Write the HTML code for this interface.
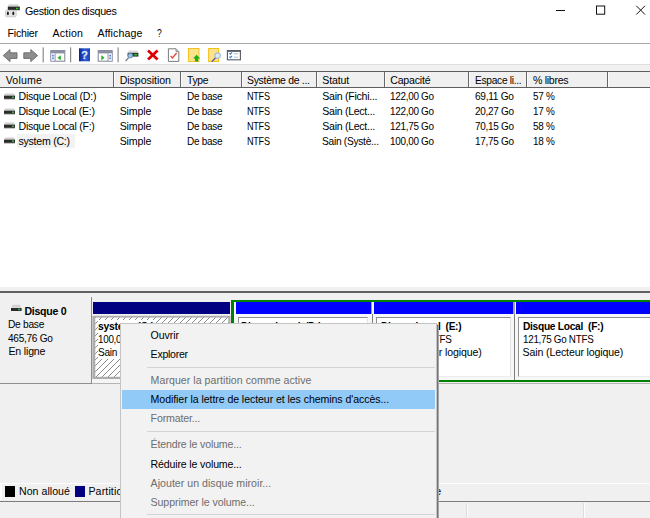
<!DOCTYPE html>
<html lang="fr">
<head>
<meta charset="utf-8">
<title>Gestion des disques</title>
<style>
html,body{margin:0;padding:0;overflow:hidden;}
body{width:650px;height:518px;overflow:hidden;position:relative;background:#fff;
 font-family:"Liberation Sans",sans-serif;font-size:10.6px;color:#000;line-height:13px;}
.a{position:absolute;white-space:nowrap;}
.t{position:absolute;white-space:pre;line-height:13px;transform-origin:0 50%;}
.b{font-weight:bold;}
.hs{position:absolute;top:72px;width:1px;height:15px;background:#666;border-right:1px solid #fcfcfc;}
.sep{position:absolute;left:147px;width:288px;height:1px;background:#d4d4d4;}

</style>
</head>
<body>
<svg class="a" style="left:4px;top:3px" width="17" height="16" viewBox="0 0 17 16">
 <path d="M5 1.2h9l1.5 2.5h-12z" fill="#d4d4d4"/>
 <rect x="3.8" y="3.6" width="12" height="3.6" fill="#2a2a2a"/>
 <rect x="12" y="4.7" width="2.3" height="1.6" fill="#2fc12f"/>
 <rect x="1.6" y="7.2" width="10.6" height="6.6" rx="1" fill="#e4e4e4" stroke="#b4b4b4" stroke-width=".6"/>
 <ellipse cx="3.9" cy="10.4" rx="1" ry="1.8" fill="#1a1a1a"/>
 <ellipse cx="9.3" cy="10.4" rx="1" ry="1.8" fill="#1a1a1a"/>
</svg>
<svg class="a" style="left:550px;top:0" width="100" height="22" viewBox="0 0 100 22">
 <path d="M6 10.5h9" stroke="#111" stroke-width="1" fill="none"/>
 <rect x="46.5" y="6" width="8.2" height="8.2" stroke="#111" stroke-width="1" fill="none"/>
 <path d="M86.3 5.8l8.7 8.7M95 5.8l-8.7 8.7" stroke="#111" stroke-width="1" fill="none"/>
</svg>
<div class="a" style="left:0;top:43px;width:650px;height:1px;background:#a9a9a9"></div>
<div class="a" style="left:0;top:64px;width:650px;height:8px;background:#f0f0f0;border-top:1px solid #dedede;box-sizing:border-box"></div>
<svg class="a" style="left:0;top:44px" width="260" height="21" viewBox="0 44 260 21">
 <defs>
  <linearGradient id="hb" x1="0" y1="0" x2="1" y2="0"><stop offset="0" stop-color="#0b1f8f"/><stop offset=".55" stop-color="#2f62d8"/><stop offset="1" stop-color="#1d3fb8"/></linearGradient>
 </defs>
 <!-- back / forward arrows -->
 <path d="M3.2 55.6l6.8-6v3.2h7v5.6h-7v3.2z" fill="#8e8e8e" stroke="#6a6a6a" stroke-width=".9" stroke-linejoin="round"/>
 <path d="M37.6 55.6l-6.8-6v3.2h-7v5.6h7v3.2z" fill="#8e8e8e" stroke="#6a6a6a" stroke-width=".9" stroke-linejoin="round"/>
 <!-- separators -->
 <rect x="42.6" y="47.4" width="1.2" height="15" fill="#8c8c8c"/>
 <rect x="70" y="47.4" width="1.2" height="15" fill="#8c8c8c"/>
 <rect x="117.5" y="47.4" width="1.2" height="15" fill="#8c8c8c"/>
 <!-- console tree icon 1 -->
 <rect x="50.8" y="50.6" width="14" height="10.6" fill="#fff" stroke="#7d8496" stroke-width="1"/>
 <rect x="50.8" y="50.6" width="14" height="2.8" fill="#8a90a2"/>
 <rect x="51.3" y="53.4" width="3.4" height="7.4" fill="#dfe6f5"/>
 <rect x="54.7" y="53.4" width=".8" height="7.6" fill="#7d8496"/>
 <rect x="52.3" y="55" width="1.3" height="1.3" fill="#2f62d8"/><rect x="52.3" y="57.6" width="1.3" height="1.3" fill="#2f62d8"/>
 <path d="M57.5 57.8l3.3-2.5v5z" fill="#20b020"/>
 <!-- help icon -->
 <rect x="79" y="48.3" width="11" height="13" fill="url(#hb)"/>
 <text x="84.5" y="59.4" font-family="Liberation Sans, sans-serif" font-weight="bold" font-size="11.5" fill="#e8f0ff" text-anchor="middle">?</text>
 <!-- console tree icon 2 -->
 <rect x="98.2" y="50.6" width="14" height="10.6" fill="#fff" stroke="#7d8496" stroke-width="1"/>
 <rect x="98.2" y="50.6" width="14" height="2.8" fill="#8a90a2"/>
 <rect x="108.4" y="53.4" width="3.4" height="7.4" fill="#dfe6f5"/>
 <rect x="107.6" y="53.4" width=".8" height="7.6" fill="#7d8496"/>
 <rect x="109.5" y="55" width="1.3" height="1.3" fill="#2f62d8"/><rect x="109.5" y="57.6" width="1.3" height="1.3" fill="#2f62d8"/>
 <path d="M104.6 57.8l-3.3-2.5v5z" fill="#20b020"/>
 <!-- rescan icon -->
 <path d="M129 50.4h8l1.3 2.4h-10.6z" fill="#d9d9d9"/>
 <rect x="127.6" y="52.8" width="10.8" height="3.8" fill="#30343a"/>
 <rect x="134.2" y="54" width="3" height="1.5" fill="#2fc12f"/>
 <circle cx="130.3" cy="55.6" r="2.4" fill="#8fc3ee" stroke="#5f7f9f" stroke-width=".8"/>
 <path d="M128.6 57.6l-3 3.6" stroke="#70757c" stroke-width="1.3"/>
 <!-- red X -->
 <path d="M148 50.6l9.6 9M157.6 50.6l-9.6 9" stroke="#e00000" stroke-width="2.7" stroke-linecap="butt"/>
 <!-- properties sheet -->
 <path d="M168.4 48.8h7.6l2.8 2.8v9.8h-10.4z" fill="#fff" stroke="#7a7a7a" stroke-width="1"/>
 <path d="M176 48.8v2.8h2.8" fill="#d0d0d0" stroke="#7a7a7a" stroke-width=".8"/>
 <path d="M170.6 55.8l1.8 2.2l4.2-5" fill="none" stroke="#e2432a" stroke-width="1.2"/>
 <!-- yellow doc with green arrow -->
 <rect x="188.4" y="48.5" width="10.6" height="13" fill="#fbe38e" stroke="#f3c21a" stroke-width="1"/>
 <path d="M196.6 54.8l3.6 3.6h-2v3.2h-3.2v-3.2h-2z" fill="#19b019"/>
 <!-- yellow doc with magnifier -->
 <rect x="208.6" y="48.5" width="10" height="13" fill="#fbe38e" stroke="#f3c21a" stroke-width="1"/>
 <path d="M215.4 58l-3.6 3.6" stroke="#5b4a9a" stroke-width="1.3"/>
 <circle cx="217.6" cy="55.6" r="2.8" fill="#dbeaf7" stroke="#8fa9cf" stroke-width="1"/>
 <!-- task list icon -->
 <rect x="227.4" y="50.8" width="13" height="9" fill="#fff" stroke="#555a66" stroke-width="1.1"/>
 <rect x="227" y="50" width="13.8" height="1.8" fill="#555a66"/>
 <path d="M229.4 53.2l1 1l1.6-1.8M229.4 56.6l1 1l1.6-1.8" fill="none" stroke="#2a7fe0" stroke-width="1.1"/>
 <path d="M233.6 53.8h4.6M233.6 57.2h4.6" stroke="#b0b6c4" stroke-width=".9"/>
</svg>

<div class="a" style="left:0;top:71px;width:650px;height:17px;background:#f0f0f0;border-top:1px solid #5e5e5e;border-bottom:1px solid #5e5e5e;box-sizing:border-box"></div>
<div class="hs" style="left:113px"></div>
<div class="hs" style="left:180px"></div>
<div class="hs" style="left:241px"></div>
<div class="hs" style="left:316px"></div>
<div class="hs" style="left:384px"></div>
<div class="hs" style="left:468px"></div>
<div class="hs" style="left:526px"></div>
<div class="hs" style="left:607px"></div>
<div class="a" style="left:17px;top:134px;width:58px;height:14px;background:#f2f2f2"></div>
<svg class="a" style="left:3px;top:92.8px" width="13" height="8" viewBox="0 0 13 8"><path d="M2 .6h9l1 2h-11z" fill="#cfcfcf"/><rect x="1" y="2.6" width="11" height="3.3" fill="#2b2b2b"/><rect x="9" y="3.5" width="2" height="1.4" fill="#35c435"/><rect x="1" y="5.9" width="11" height=".9" fill="#bdbdbd"/></svg>
<svg class="a" style="left:3px;top:107.5px" width="13" height="8" viewBox="0 0 13 8"><path d="M2 .6h9l1 2h-11z" fill="#cfcfcf"/><rect x="1" y="2.6" width="11" height="3.3" fill="#2b2b2b"/><rect x="9" y="3.5" width="2" height="1.4" fill="#35c435"/><rect x="1" y="5.9" width="11" height=".9" fill="#bdbdbd"/></svg>
<svg class="a" style="left:3px;top:122.3px" width="13" height="8" viewBox="0 0 13 8"><path d="M2 .6h9l1 2h-11z" fill="#cfcfcf"/><rect x="1" y="2.6" width="11" height="3.3" fill="#2b2b2b"/><rect x="9" y="3.5" width="2" height="1.4" fill="#35c435"/><rect x="1" y="5.9" width="11" height=".9" fill="#bdbdbd"/></svg>
<svg class="a" style="left:3px;top:137.0px" width="13" height="8" viewBox="0 0 13 8"><path d="M2 .6h9l1 2h-11z" fill="#cfcfcf"/><rect x="1" y="2.6" width="11" height="3.3" fill="#2b2b2b"/><rect x="9" y="3.5" width="2" height="1.4" fill="#35c435"/><rect x="1" y="5.9" width="11" height=".9" fill="#bdbdbd"/></svg>
<div class="a" style="left:0;top:287px;width:650px;height:231px;background:#f0f0f0"></div>
<div class="a" style="left:0;top:291.4px;width:650px;height:1.6px;background:#606060"></div>
<div class="a" style="left:0;top:383px;width:650px;height:1px;background:#b4b4b4"></div>
<div class="a" style="left:92px;top:378.5px;width:139px;height:4.5px;background:#f5f5f5"></div>
<div class="a" style="left:0;top:296.5px;width:91.7px;height:87.2px;background:#f0f0f0;border-right:1px solid #8e8e8e;border-bottom:1px solid #8e8e8e;box-sizing:border-box"></div>
<svg class="a" style="left:10px;top:304px" width="12" height="8" viewBox="0 0 12 8"><path d="M2.4 .8h7.6l1 3h-9.6z" fill="#d2d2d2"/><rect x="1" y="4" width="10.6" height="3" fill="#2b2b2b"/><rect x="8.2" y="4.7" width="2" height="1.4" fill="#35c435"/></svg>
<div class="a" style="left:92.5px;top:302.4px;width:137.5px;height:11.6px;background:#000080"></div>
<svg class="a" style="left:92px;top:314.5px" width="139" height="64" viewBox="0 0 139 64">
 <defs><pattern id="hz" width="6" height="6" patternUnits="userSpaceOnUse"><rect width="6" height="6" fill="#fff"/><path d="M-1 7l8-8M-1 1l2-2M5 7l2-2" stroke="#6e6e6e" stroke-width=".8"/></pattern></defs>
 <rect x=".4" y=".8" width="138" height="63.2" fill="#adadad"/>
 <rect x="3.3" y="2.6" width="133" height="59.2" fill="url(#hz)"/>
</svg>
<div class="a" style="left:231px;top:299.7px;width:419px;height:82.4px;border:solid #008000;border-width:2.5px 0 2.4px 3.4px;box-sizing:border-box;background:#f7f7f7"></div>
<div class="a" style="left:236px;top:302.2px;width:134.8px;height:11.8px;background:#0000ff"></div>
<div class="a" style="left:238px;top:316.6px;width:130.4px;height:60px;background:#fff;border:1px solid #8e8e8e;border-right-color:#e4e4e4;border-bottom-color:#ececec;box-sizing:border-box"></div>
<div class="a" style="left:370.8px;top:302.2px;width:2.7px;height:11.8px;background:linear-gradient(90deg,#a4a49c 0 55%,#f4f4f4 55%)"></div>
<div class="a" style="left:371.6px;top:314px;width:1px;height:65.7px;background:#7e7e7e"></div>
<div class="a" style="left:373.6px;top:302.2px;width:139.6px;height:11.8px;background:#0000ff"></div>
<div class="a" style="left:375.6px;top:316.6px;width:135.2px;height:60px;background:#fff;border:1px solid #8e8e8e;border-right-color:#e4e4e4;border-bottom-color:#ececec;box-sizing:border-box"></div>
<div class="a" style="left:513.2px;top:302.2px;width:2.7px;height:11.8px;background:linear-gradient(90deg,#a4a49c 0 55%,#f4f4f4 55%)"></div>
<div class="a" style="left:514px;top:314px;width:1px;height:65.7px;background:#7e7e7e"></div>
<div class="a" style="left:515.9px;top:302.2px;width:146.1px;height:11.8px;background:#0000ff"></div>
<div class="a" style="left:517.9px;top:316.6px;width:141.7px;height:60px;background:#fff;border:1px solid #8e8e8e;border-right-color:#e4e4e4;border-bottom-color:#ececec;box-sizing:border-box"></div>
<div class="a" style="left:0;top:483px;width:650px;height:1px;background:#fdfdfd"></div>
<div class="a" style="left:0;top:500.5px;width:650px;height:1px;background:#7d7d7d"></div>
<div class="a" style="left:0;top:483px;width:1.5px;height:17px;background:#fcfcfc"></div>
<div class="a" style="left:5px;top:486px;width:9.5px;height:11px;background:#000"></div>
<div class="a" style="left:75px;top:486px;width:9.5px;height:11px;background:#000080"></div>
<div class="a" style="left:466px;top:503px;width:1px;height:15px;background:#fdfdfd;border-left:1px solid #dcdcdc"></div>
<div class="a" style="left:583px;top:503px;width:1px;height:15px;background:#fdfdfd;border-left:1px solid #dcdcdc"></div>
<div class="t" style="left:24.6px;top:5.3px;font-size:11px;letter-spacing:-0.30px;transform:scaleX(0.974);">Gestion des disques</div>
<div class="t" style="left:7.5px;top:27.3px;letter-spacing:-0.21px;">Fichier</div>
<div class="t" style="left:52.6px;top:27.3px;letter-spacing:0.16px;">Action</div>
<div class="t" style="left:97.6px;top:27.3px;letter-spacing:0.09px;">Affichage</div>
<div class="t" style="left:156.8px;top:27.3px;letter-spacing:-0.30px;transform:scaleX(0.804);">?</div>
<div class="t" style="left:5.7px;top:74.1px;letter-spacing:0.19px;">Volume</div>
<div class="t" style="left:119.7px;top:74.1px;letter-spacing:-0.05px;">Disposition</div>
<div class="t" style="left:186.6px;top:74.1px;letter-spacing:-0.30px;transform:scaleX(0.973);">Type</div>
<div class="t" style="left:246.7px;top:74.1px;letter-spacing:-0.30px;transform:scaleX(0.986);">Système de ...</div>
<div class="t" style="left:322.3px;top:74.1px;letter-spacing:-0.16px;">Statut</div>
<div class="t" style="left:390.2px;top:74.1px;letter-spacing:-0.21px;">Capacité</div>
<div class="t" style="left:474.6px;top:74.1px;letter-spacing:-0.30px;transform:scaleX(0.962);">Espace li...</div>
<div class="t" style="left:533.0px;top:74.1px;letter-spacing:-0.30px;">% libres</div>
<div class="t" style="left:18.5px;top:90.3px;letter-spacing:-0.24px;">Disque Local (D:)</div>
<div class="t" style="left:119.7px;top:90.3px;letter-spacing:-0.15px;">Simple</div>
<div class="t" style="left:186.6px;top:90.3px;letter-spacing:-0.30px;transform:scaleX(0.942);">De base</div>
<div class="t" style="left:246.7px;top:90.3px;letter-spacing:-0.30px;transform:scaleX(0.858);">NTFS</div>
<div class="t" style="left:322.3px;top:90.3px;letter-spacing:-0.28px;">Sain (Fichi...</div>
<div class="t" style="left:390.2px;top:90.3px;letter-spacing:-0.30px;transform:scaleX(0.936);">122,00 Go</div>
<div class="t" style="left:474.6px;top:90.3px;letter-spacing:-0.30px;transform:scaleX(0.958);">69,11 Go</div>
<div class="t" style="left:533.0px;top:90.3px;letter-spacing:-0.30px;transform:scaleX(0.937);">57 %</div>
<div class="t" style="left:18.5px;top:105.0px;letter-spacing:-0.30px;">Disque Local (E:)</div>
<div class="t" style="left:119.7px;top:105.0px;letter-spacing:-0.15px;">Simple</div>
<div class="t" style="left:186.6px;top:105.0px;letter-spacing:-0.30px;transform:scaleX(0.942);">De base</div>
<div class="t" style="left:246.7px;top:105.0px;letter-spacing:-0.30px;transform:scaleX(0.858);">NTFS</div>
<div class="t" style="left:322.3px;top:105.0px;letter-spacing:-0.30px;">Sain (Lect...</div>
<div class="t" style="left:390.2px;top:105.0px;letter-spacing:-0.30px;transform:scaleX(0.936);">122,00 Go</div>
<div class="t" style="left:474.6px;top:105.0px;letter-spacing:-0.30px;transform:scaleX(0.940);">20,27 Go</div>
<div class="t" style="left:533.0px;top:105.0px;letter-spacing:-0.30px;transform:scaleX(0.937);">17 %</div>
<div class="t" style="left:18.5px;top:119.8px;letter-spacing:-0.27px;">Disque Local (F:)</div>
<div class="t" style="left:119.7px;top:119.8px;letter-spacing:-0.15px;">Simple</div>
<div class="t" style="left:186.6px;top:119.8px;letter-spacing:-0.30px;transform:scaleX(0.942);">De base</div>
<div class="t" style="left:246.7px;top:119.8px;letter-spacing:-0.30px;transform:scaleX(0.858);">NTFS</div>
<div class="t" style="left:322.3px;top:119.8px;letter-spacing:-0.30px;">Sain (Lect...</div>
<div class="t" style="left:390.2px;top:119.8px;letter-spacing:-0.30px;transform:scaleX(0.936);">121,75 Go</div>
<div class="t" style="left:474.6px;top:119.8px;letter-spacing:-0.30px;transform:scaleX(0.940);">70,15 Go</div>
<div class="t" style="left:533.0px;top:119.8px;letter-spacing:-0.30px;transform:scaleX(0.937);">58 %</div>
<div class="t" style="left:18.5px;top:134.5px;letter-spacing:-0.26px;">system (C:)</div>
<div class="t" style="left:119.7px;top:134.5px;letter-spacing:-0.15px;">Simple</div>
<div class="t" style="left:186.6px;top:134.5px;letter-spacing:-0.30px;transform:scaleX(0.942);">De base</div>
<div class="t" style="left:246.7px;top:134.5px;letter-spacing:-0.30px;transform:scaleX(0.858);">NTFS</div>
<div class="t" style="left:322.3px;top:134.5px;letter-spacing:-0.30px;transform:scaleX(0.964);">Sain (Systè...</div>
<div class="t" style="left:390.2px;top:134.5px;letter-spacing:-0.30px;transform:scaleX(0.936);">100,00 Go</div>
<div class="t" style="left:474.6px;top:134.5px;letter-spacing:-0.30px;transform:scaleX(0.940);">17,75 Go</div>
<div class="t" style="left:533.0px;top:134.5px;letter-spacing:-0.30px;transform:scaleX(0.937);">18 %</div>
<div class="t b" style="left:24.5px;top:304.8px;letter-spacing:-0.30px;">Disque 0</div>
<div class="t" style="left:8.4px;top:318.3px;letter-spacing:-0.30px;transform:scaleX(0.966);">De base</div>
<div class="t" style="left:8.4px;top:331.5px;letter-spacing:-0.30px;transform:scaleX(0.953);">465,76 Go</div>
<div class="t" style="left:8.4px;top:344.7px;letter-spacing:-0.17px;">En ligne</div>
<div class="t" style="left:19.0px;top:485.1px;letter-spacing:0.03px;">Non alloué</div>
<div class="t" style="left:88.4px;top:485.1px;letter-spacing:0.14px;">Partition principale</div>
<div class="t" style="left:196.0px;top:485.1px;letter-spacing:0.23px;">Partition étendue</div>
<div class="t" style="left:298.0px;top:485.1px;letter-spacing:-0.11px;">Espace libre</div>
<div class="t" style="left:373.0px;top:485.1px;letter-spacing:-0.30px;">Lecteur logique</div>
<div class="t b" style="left:98.2px;top:319.9px;letter-spacing:-0.30px;transform:scaleX(0.982);background:#fff;">system  (C:)</div>
<div class="t" style="left:98.2px;top:332.7px;letter-spacing:-0.30px;transform:scaleX(0.928);background:#fff;">100,00 Go NTFS</div>
<div class="t" style="left:98.2px;top:346.3px;letter-spacing:-0.30px;transform:scaleX(0.954);background:#fff;">Sain (Système</div>
<div class="t b" style="left:241.4px;top:319.9px;letter-spacing:-0.30px;transform:scaleX(0.949);">Disque Local  (D:)</div>
<div class="t" style="left:241.4px;top:332.7px;letter-spacing:-0.30px;transform:scaleX(0.928);">122,00 Go NTFS</div>
<div class="t" style="left:241.4px;top:346.3px;letter-spacing:-0.18px;">Sain (Fichier d'échange, L</div>
<div class="t b" style="left:381.0px;top:319.9px;letter-spacing:-0.30px;transform:scaleX(0.955);">Disque Local  (E:)</div>
<div class="t" style="left:381.0px;top:332.7px;letter-spacing:-0.30px;transform:scaleX(0.928);">122,00 Go NTFS</div>
<div class="t" style="left:381.0px;top:346.3px;letter-spacing:-0.14px;">Sain (Lecteur logique)</div>
<div class="t b" style="left:522.6px;top:319.9px;letter-spacing:-0.30px;transform:scaleX(0.962);">Disque Local  (F:)</div>
<div class="t" style="left:522.6px;top:332.7px;letter-spacing:-0.30px;transform:scaleX(0.928);">121,75 Go NTFS</div>
<div class="t" style="left:522.6px;top:346.3px;letter-spacing:-0.14px;">Sain (Lecteur logique)</div>
<div class="a" style="left:120px;top:322.6px;width:317px;height:200px;background:#f2f2f2;border:1px solid #c4c4c4;box-sizing:border-box"></div>
<div class="a" style="left:437px;top:326px;width:1px;height:200px;background:#757575;border-right:1px solid #a6a6a6"></div>
<div class="a" style="left:122px;top:390px;width:313px;height:18.6px;background:#91c9f7"></div>
<div class="sep" style="top:367px"></div>
<div class="sep" style="top:431.4px"></div>
<div class="sep" style="top:514.4px"></div>
<div class="t" style="left:150.6px;top:328.7px;letter-spacing:-0.06px;">Ouvrir</div>
<div class="t" style="left:150.6px;top:348.1px;letter-spacing:-0.27px;">Explorer</div>
<div class="t" style="left:150.6px;top:373.5px;letter-spacing:0.04px;color:#6d6d6d;">Marquer la partition comme active</div>
<div class="t" style="left:150.6px;top:392.7px;letter-spacing:-0.08px;">Modifier la lettre de lecteur et les chemins d'accès...</div>
<div class="t" style="left:150.6px;top:412.0px;letter-spacing:-0.16px;color:#6d6d6d;">Formater...</div>
<div class="t" style="left:150.6px;top:438.3px;letter-spacing:-0.16px;color:#6d6d6d;">Étendre le volume...</div>
<div class="t" style="left:150.6px;top:457.5px;letter-spacing:-0.16px;">Réduire le volume...</div>
<div class="t" style="left:150.6px;top:476.7px;letter-spacing:0.02px;color:#6d6d6d;">Ajouter un disque miroir...</div>
<div class="t" style="left:150.6px;top:495.8px;letter-spacing:-0.09px;color:#6d6d6d;">Supprimer le volume...</div>
</body>
</html>
